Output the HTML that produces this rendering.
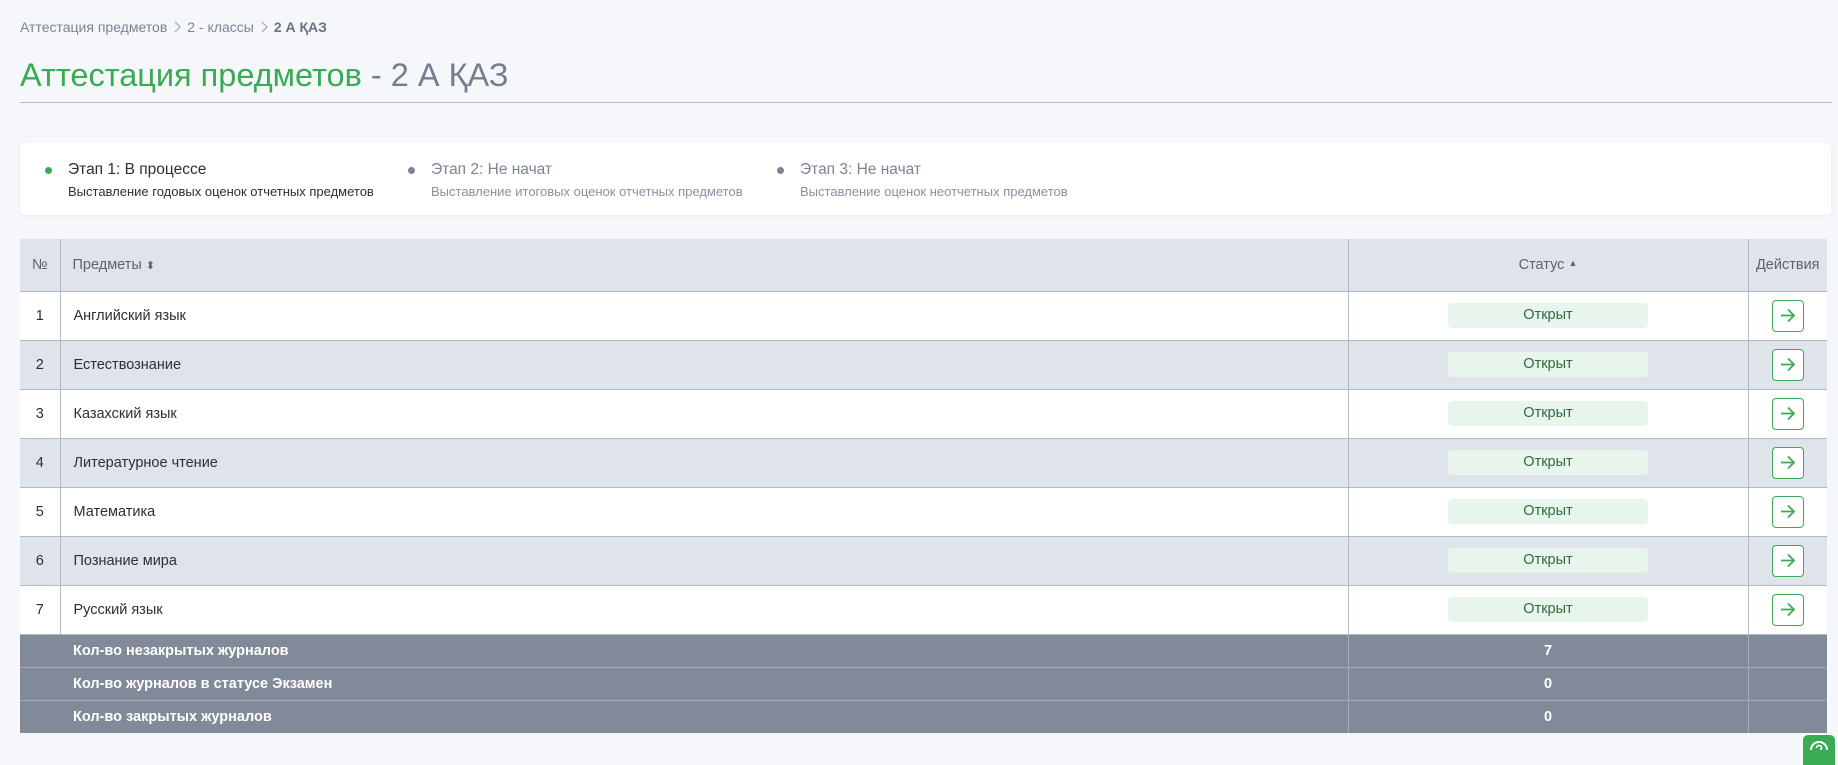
<!DOCTYPE html>
<html><head><meta charset="utf-8"><style>
*{box-sizing:border-box;margin:0;padding:0}
body{width:1838px;height:750px;overflow:hidden;background:#f5f7fa;font-family:"Liberation Sans",sans-serif;color:#2b2f3a;position:relative}
.bc{position:absolute;left:20px;top:19px;font-size:14px;color:#7c8394}
.bc b{color:#6b7283}
.bc svg{margin:0 6px;vertical-align:-1px}
h1{position:absolute;left:20px;top:57px;font-size:32.5px;font-weight:normal;color:#3aaa55}
h1 span{color:#767d8e}
.hr{position:absolute;left:20px;top:102px;width:1812px;height:1px;background:#b4b9c4}
.card{position:absolute;left:20px;top:143px;width:1811px;height:72px;background:#fff;border-radius:5px;box-shadow:0 1px 4px rgba(0,0,0,.06)}
.st{position:absolute;top:18px}
.st .d{position:absolute;left:-23px;top:6px;width:7px;height:7px;border-radius:50%;background:#7c8394}
.st .t{font-size:15.5px;color:#7c8394;white-space:nowrap}
.st .u{font-size:13px;color:#8a90a0;margin-top:5px;white-space:nowrap}
table{position:absolute;left:20px;top:239px;width:1807px;border-collapse:collapse;font-size:14.5px}
td,th{border:1px solid #b4b9c6;font-weight:normal}
tr>*:first-child{border-left:none}tr>*:last-child{border-right:none}
thead th{height:52px;background:#dfe3ea;color:#5b6272;border-top:none}
tbody td{height:49px}
tbody tr:nth-child(even) td{background:#dfe3ea}
tbody tr:nth-child(odd) td{background:#fff}
.badge{display:inline-block;width:200px;height:25px;line-height:25px;background:#e8f5ec;color:#2f6b3f;border-radius:4px}
.btn{display:inline-block;width:32px;height:32px;border:1.5px solid #3aaa55;border-radius:4px;background:#fff;vertical-align:middle}
tfoot td{background:#828a99;color:#fff;font-weight:bold;height:33px;border-color:#a6acb8;border-bottom:none}
.c{text-align:center}
.help{position:absolute;left:1803px;top:735px;width:32px;height:30px;background:#3aaa55;border-radius:5px 5px 0 0}
</style></head><body>
<div class="bc">Аттестация предметов<svg width="8" height="12" viewBox="0 0 8 12"><path d="M2 1l5 5-5 5" stroke="#a0a6b3" stroke-width="1.2" fill="none"/></svg>2 - классы<svg width="8" height="12" viewBox="0 0 8 12"><path d="M2 1l5 5-5 5" stroke="#a0a6b3" stroke-width="1.2" fill="none"/></svg><b>2 А ҚАЗ</b></div>
<h1>Аттестация предметов <span>- 2 А ҚАЗ</span></h1>
<div class="hr"></div>
<div class="card">
<div class="st" style="left:48px"><div class="d" style="background:#3aaa55"></div><div class="t" style="color:#2b2f3a">Этап 1: В процессе</div><div class="u" style="color:#2b2f3a">Выставление годовых оценок отчетных предметов</div></div>
<div class="st" style="left:411px"><div class="d"></div><div class="t">Этап 2: Не начат</div><div class="u">Выставление итоговых оценок отчетных предметов</div></div>
<div class="st" style="left:780px"><div class="d"></div><div class="t">Этап 3: Не начат</div><div class="u">Выставление оценок неотчетных предметов</div></div>
</div>
<table>
<colgroup><col style="width:40px"><col style="width:1288px"><col style="width:400px"><col style="width:79px"></colgroup>
<thead><tr><th>№</th><th style="text-align:left;padding-left:12px">Предметы <span style="font-size:11px">⬍</span></th><th>Статус <span style="font-size:9px;vertical-align:3px">▲</span></th><th>Действия</th></tr></thead>
<tbody>
<tr><td class="c">1</td><td style="padding-left:13px">Английский язык</td><td class="c"><span class="badge">Открыт</span></td><td class="c"><span class="btn"><svg width="29" height="29" viewBox="0 0 29 29"><path d="M8 14.5h13M15 8.5l6 6-6 6" stroke="#3aaa55" stroke-width="1.8" fill="none"/></svg></span></td></tr>
<tr><td class="c">2</td><td style="padding-left:13px">Естествознание</td><td class="c"><span class="badge">Открыт</span></td><td class="c"><span class="btn"><svg width="29" height="29" viewBox="0 0 29 29"><path d="M8 14.5h13M15 8.5l6 6-6 6" stroke="#3aaa55" stroke-width="1.8" fill="none"/></svg></span></td></tr>
<tr><td class="c">3</td><td style="padding-left:13px">Казахский язык</td><td class="c"><span class="badge">Открыт</span></td><td class="c"><span class="btn"><svg width="29" height="29" viewBox="0 0 29 29"><path d="M8 14.5h13M15 8.5l6 6-6 6" stroke="#3aaa55" stroke-width="1.8" fill="none"/></svg></span></td></tr>
<tr><td class="c">4</td><td style="padding-left:13px">Литературное чтение</td><td class="c"><span class="badge">Открыт</span></td><td class="c"><span class="btn"><svg width="29" height="29" viewBox="0 0 29 29"><path d="M8 14.5h13M15 8.5l6 6-6 6" stroke="#3aaa55" stroke-width="1.8" fill="none"/></svg></span></td></tr>
<tr><td class="c">5</td><td style="padding-left:13px">Математика</td><td class="c"><span class="badge">Открыт</span></td><td class="c"><span class="btn"><svg width="29" height="29" viewBox="0 0 29 29"><path d="M8 14.5h13M15 8.5l6 6-6 6" stroke="#3aaa55" stroke-width="1.8" fill="none"/></svg></span></td></tr>
<tr><td class="c">6</td><td style="padding-left:13px">Познание мира</td><td class="c"><span class="badge">Открыт</span></td><td class="c"><span class="btn"><svg width="29" height="29" viewBox="0 0 29 29"><path d="M8 14.5h13M15 8.5l6 6-6 6" stroke="#3aaa55" stroke-width="1.8" fill="none"/></svg></span></td></tr>
<tr><td class="c">7</td><td style="padding-left:13px">Русский язык</td><td class="c"><span class="badge">Открыт</span></td><td class="c"><span class="btn"><svg width="29" height="29" viewBox="0 0 29 29"><path d="M8 14.5h13M15 8.5l6 6-6 6" stroke="#3aaa55" stroke-width="1.8" fill="none"/></svg></span></td></tr>
</tbody>
<tfoot>
<tr><td style="border-right:none"></td><td style="border-left:none;padding-left:13px">Кол-во незакрытых журналов</td><td class="c">7</td><td></td></tr>
<tr><td style="border-right:none"></td><td style="border-left:none;padding-left:13px">Кол-во журналов в статусе Экзамен</td><td class="c">0</td><td></td></tr>
<tr><td style="border-right:none"></td><td style="border-left:none;padding-left:13px">Кол-во закрытых журналов</td><td class="c">0</td><td></td></tr>
</tfoot>
</table>
<div class="help"><svg width="32" height="15" viewBox="0 0 32 15"><circle cx="16" cy="15" r="8" stroke="#fff" stroke-width="2" fill="none"/><path d="M13.5 13a2.5 2.5 0 1 1 3.5 2.2" stroke="#fff" stroke-width="1.6" fill="none"/></svg></div>
</body></html>
